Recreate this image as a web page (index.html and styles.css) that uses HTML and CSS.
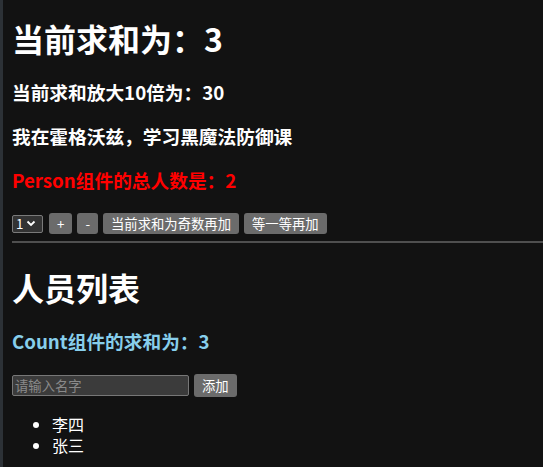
FILE: index.html
```html
<!DOCTYPE html>
<html lang="zh-CN">
<head>
<meta charset="utf-8">
<title>Demo</title>
<link rel="stylesheet" href="styles.css">
</head>
<body>
<div class="page">
  <h1 class="title">当前求和为：3</h1>
  <h3 class="sub first">当前求和放大10倍为：30</h3>
  <h3 class="sub">我在霍格沃兹，学习黑魔法防御课</h3>
  <h3 class="sub red">Person组件的总人数是：2</h3>
  <div class="controls">
    <div class="select"><span>1</span><svg width="10" height="7" viewBox="0 0 10 7"><path d="M1.5 1.5 L5 5 L8.5 1.5" fill="none" stroke="#fff" stroke-width="1.8"/></svg></div>
    <button class="btn">+</button>
    <button class="btn">-</button>
    <button class="btn">当前求和为奇数再加</button>
    <button class="btn">等一等再加</button>
  </div>
  <hr class="divider">
  <h1 class="title second">人员列表</h1>
  <h3 class="sub blue">Count组件的求和为：3</h3>
  <div class="add-row">
    <input class="name-input" type="text" placeholder="请输入名字">
    <button class="btn add">添加</button>
  </div>
  <ul class="people">
    <li>李四</li>
    <li>张三</li>
  </ul>
</div>
</body>
</html>
```
FILE: styles.css
```css
html, body {
  margin: 0;
  padding: 0;
  background: #121212;
  height: 100%;
}
body {
  border-left: 3px solid #2c3136;
  box-sizing: border-box;
  font-family: "Noto Sans CJK SC", "Noto Sans", sans-serif;
  color: #fff;
}
.page {
  padding: 0 0 0 9px;
  display: flow-root;
}
.title {
  font-size: 32px;
  line-height: 40px;
  font-weight: 700;
  margin: 18px 0 0 0;
}
.title.second {
  margin-top: 24px;
}
.sub {
  font-size: 18.7px;
  line-height: 26px;
  font-weight: 700;
  margin: 18px 0 0 0;
}
.sub.first {
  margin-top: 21px;
}
.red {
  color: #ff0000;
}
.blue {
  color: #87ceeb;
  margin-top: 21px;
}
.controls {
  display: flex;
  align-items: center;
  gap: 5px;
  margin-top: 20px;
}
.select {
  box-sizing: border-box;
  width: 31px;
  height: 18px;
  background: #333;
  border: 1px solid #7a7a7a;
  border-radius: 2px;
  display: flex;
  align-items: center;
  gap: 3px;
  padding-left: 3px;
  font-size: 13.33px;
  line-height: 16px;
  margin-right: 1px;
}
.select svg {
  display: block;
}
.btn {
  font-family: "Noto Sans CJK SC", "Noto Sans", sans-serif;
  font-size: 13.33px;
  line-height: 17px;
  padding: 2px 8px;
  background: #6b6b6b;
  color: #fff;
  border: none;
  border-radius: 3px;
  margin: 0;
}
.divider {
  border: none;
  height: 2px;
  background: #4f4f4f;
  margin: 7px 0 0 0;
}
.add-row {
  display: flex;
  align-items: center;
  gap: 5px;
  margin-top: 20px;
}
.name-input {
  box-sizing: border-box;
  width: 177px;
  height: 21px;
  background: #3b3b3b;
  border: 1px solid #777;
  border-radius: 2px;
  color: #fff;
  font-family: "Noto Sans CJK SC", "Noto Sans", sans-serif;
  font-size: 13.33px;
  padding: 0 2px;
  margin: 0;
}
.name-input::placeholder {
  color: #8a8a8a;
}
.btn.add {
  padding: 3px 8px;
}
.people {
  margin: 17px 0 0 0;
  padding-left: 40px;
  font-size: 16px;
  line-height: 21px;
}
```
